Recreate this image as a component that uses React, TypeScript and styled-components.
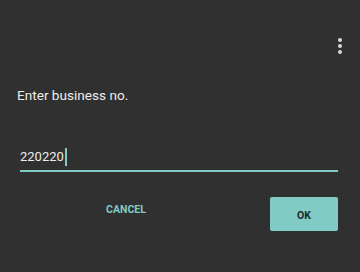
import * as React from 'react';
import styled, {createGlobalStyle} from "styled-components";

const GlobalStyle = createGlobalStyle`
    html, body {
        margin: 0;
        padding: 0;
        background: #303030;
    }
    body {
        font-family: Roboto, "Liberation Sans", sans-serif;
    }
`

const accent = "#80cbc4";

export default function App() {
    return (
        <>
            <GlobalStyle/>
            <Screen>
                <TopBar>
                    <MoreButton aria-label="More options">
                        <Dot/>
                        <Dot/>
                        <Dot/>
                    </MoreButton>
                </TopBar>
                <Label>Enter business no.</Label>
                <Field>
                    <Value>220220</Value>
                    <Caret/>
                </Field>
                <Actions>
                    <TextButton>CANCEL</TextButton>
                    <FilledButton>OK</FilledButton>
                </Actions>
            </Screen>
        </>
    );
}

const Screen = styled.div`
    width: 360px;
    height: 272px;
    background: #303030;
    display: flex;
    flex-direction: column;
    box-sizing: border-box;
    overflow: hidden;
`
const TopBar = styled.div`
    height: 38px;
    display: flex;
    justify-content: flex-end;
    align-items: flex-end;
    padding-right: 18px;
`
const MoreButton = styled.div`
    display: flex;
    flex-direction: column;
    gap: 2px;
    margin-bottom: -16px;
`
const Dot = styled.span`
    width: 4px;
    height: 4px;
    border-radius: 50%;
    background: #d8d8d8;
`
const Label = styled.div`
    margin: 49px 0 0 17px;
    font-size: 13.6px;
    line-height: 16px;
    color: #ededed;
`
const Field = styled.div`
    margin: 44px 22px 0 20px;
    height: 20px;
    display: flex;
    align-items: center;
    border-bottom: 2px solid ${accent};
    padding-bottom: 3px;
`
const Value = styled.span`
    font-size: 13px;
    color: #ececec;
    line-height: 16px;
`
const Caret = styled.span`
    width: 2px;
    height: 18px;
    margin-left: 1px;
    background: ${accent};
`
const Actions = styled.div`
    display: flex;
    align-items: flex-start;
    margin: 25px 22px 0 0;
`
const TextButton = styled.div`
    width: 68px;
    margin-left: 92px;
    padding-top: 6px;
    text-align: center;
    font-size: 10.5px;
    font-weight: 700;
    color: ${accent};
`
const FilledButton = styled.div`
    margin-left: auto;
    width: 68px;
    height: 34px;
    border-radius: 2px;
    background: ${accent};
    color: #1e2a28;
    font-size: 10.5px;
    font-weight: 700;
    display: flex;
    align-items: center;
    justify-content: center;
    padding-top: 2px;
    box-sizing: border-box;
`
